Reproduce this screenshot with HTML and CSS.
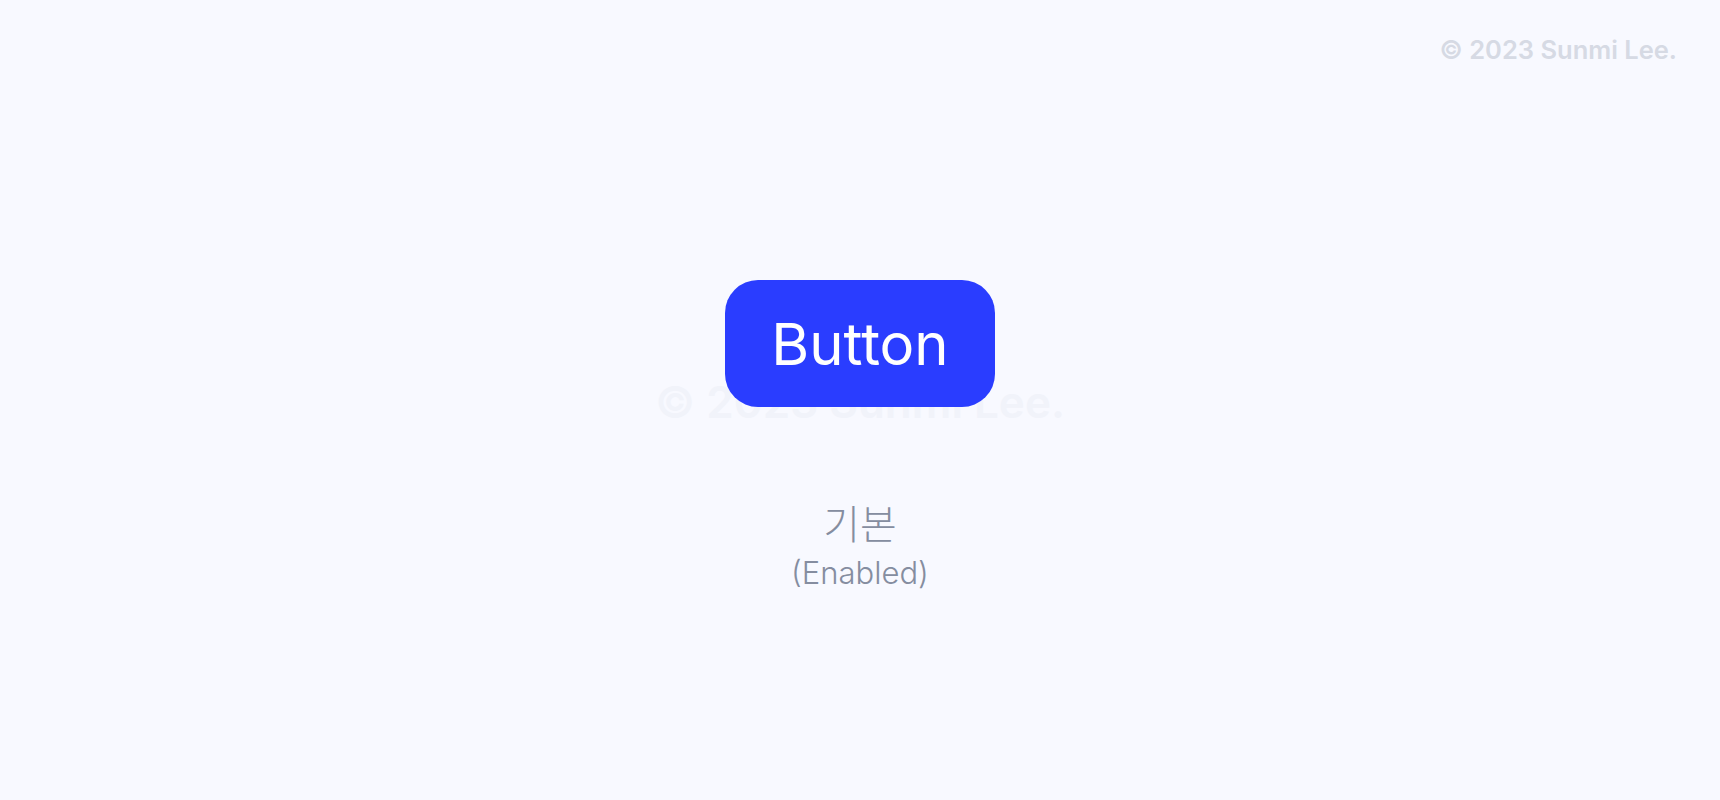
FILE: index.html
```html
<!DOCTYPE html>
<html lang="ko">
  <head>
    <meta charset="utf-8">
    <title>Button - Enabled</title>
    <link rel="stylesheet" href="styles.css">
  </head>
  <body>
    <header class="credit">© 2023 Sunmi Lee.</header>

    <main class="stage">
      <div class="watermark">© 2023 Sunmi Lee.</div>
      <button class="btn">Button</button>
      <div class="state">
        <p class="state-ko">기본</p>
        <p class="state-en">(Enabled)</p>
      </div>
    </main>
  </body>
</html>
```

FILE: styles.css
```css
body {
  margin: 0;
  height: 800px;
  background: #f8f9ff;
  font-family: Inter, "Noto Sans CJK KR", sans-serif;
}
.credit {
  padding: 33px 43px 0 0;
  text-align: right;
  font-size: 25.5px;
  line-height: 34px;
  font-weight: 600;
  color: #d6dae4;
}
.stage {
  position: relative;
  display: flex;
  flex-direction: column;
  align-items: center;
  padding-top: 213px;
}
.watermark {
  position: absolute;
  top: 308px;
  left: 0;
  right: 0;
  text-align: center;
  font-size: 44px;
  line-height: 54px;
  font-weight: 600;
  color: #f1f3fa;
}
.btn {
  position: relative;
  padding: 0 46px;
  height: 127px;
  border: none;
  border-radius: 33px;
  background: #2a3dff;
  color: #fff;
  font-family: inherit;
  font-size: 58px;
  font-weight: 400;
  cursor: pointer;
}
.state {
  margin-top: 90px;
  text-align: center;
  color: #858da0;
}
.state p {
  margin: 0;
}
.state-ko {
  font-family: "Noto Sans CJK KR", sans-serif;
  font-size: 40px;
  font-weight: 300;
  line-height: 50px;
}
.state-en {
  font-size: 31px;
  font-weight: 300;
  line-height: 52px;
}
```
